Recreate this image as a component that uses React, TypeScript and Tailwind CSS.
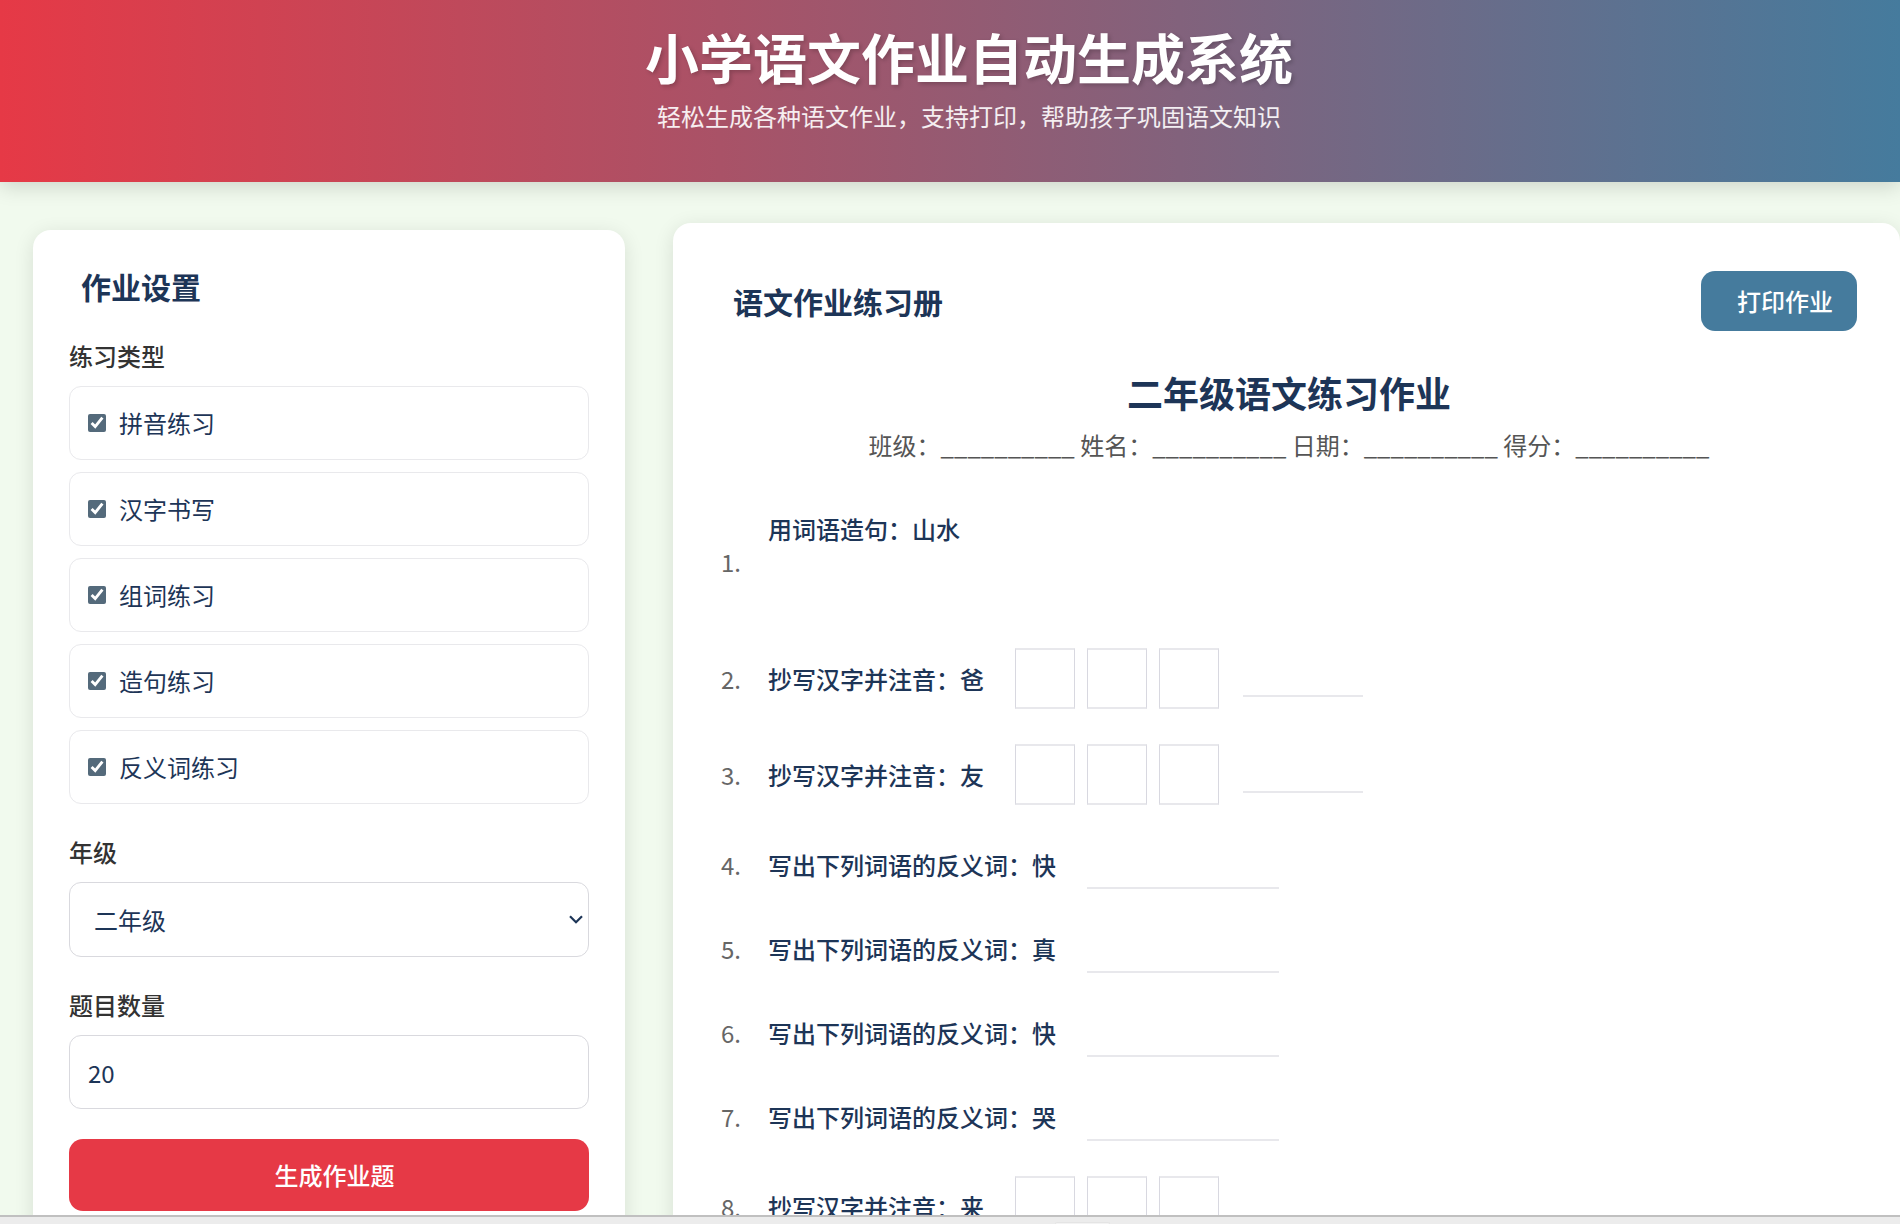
import React from "react";

const cjk = "font-['Noto_Sans_CJK_SC','Noto_Sans',sans-serif]";
const types = ["拼音练习", "汉字书写", "组词练习", "造句练习", "反义词练习"];
const rows: { t: "b" | "a"; text: string }[] = [
  { t: "b", text: "抄写汉字并注音：爸" },
  { t: "b", text: "抄写汉字并注音：友" },
  { t: "a", text: "写出下列词语的反义词：快" },
  { t: "a", text: "写出下列词语的反义词：真" },
  { t: "a", text: "写出下列词语的反义词：快" },
  { t: "a", text: "写出下列词语的反义词：哭" },
  { t: "b", text: "抄写汉字并注音：来" },
];

function Label({ children, className }: { children: React.ReactNode; className: string }) {
  return <div className={`h-9 leading-9 text-2xl font-medium text-[#333333] ${className}`}>{children}</div>;
}

export default function App() {
  return (
    <div className={`${cjk} w-full h-[1224px] overflow-hidden flex flex-col bg-[#f1faee]`}>
      <header className="h-[182px] shrink-0 relative z-10 flex flex-col items-center pl-[38px] pt-[22px] text-white bg-[linear-gradient(90deg,#e63946,#457b9d)] shadow-[0_4px_20px_rgba(0,0,0,0.16)]">
        <h1 className="text-[54px] leading-[70px] font-bold text-shadow-[2px_2px_4px_rgba(0,0,0,0.2)]">小学语文作业自动生成系统</h1>
        <p className="text-2xl leading-9 mt-[6px] text-white/90">轻松生成各种语文作业，支持打印，帮助孩子巩固语文知识</p>
      </header>

      <main className="flex-1 min-h-0 overflow-hidden flex items-start gap-12 pl-[33px]">
        <aside className="w-[592px] shrink-0 mt-[48px] bg-white rounded-[18px] px-9 pt-[38px] pb-10 shadow-[0_4px_20px_rgba(0,0,0,0.11)]">
          <h2 className="h-9 leading-9 pl-3 text-[30px] font-bold text-[#1d3557]">作业设置</h2>
          <Label className="mt-[34px]">练习类型</Label>
          <div className="mt-3 flex flex-col gap-3">
            {types.map((t) => (
              <label key={t} className="h-[74px] flex items-center gap-[14px] pl-[18px] border-[1.5px] border-[#e9e9ec] rounded-xl text-2xl text-[#1d3557]">
                <input type="checkbox" defaultChecked className="w-[18px] h-[18px] m-0 accent-[#546a7b]" />
                <span className="-ml-px">{t}</span>
              </label>
            ))}
          </div>
          <Label className="mt-[30px]">年级</Label>
          <div className="relative mt-3 h-[75px]">
            <select defaultValue="2" className="appearance-none w-full h-full pl-[24px] pr-8 border-[1.5px] border-[#d9d9de] rounded-xl bg-white text-2xl text-[#1d3557]">
              <option value="1">一年级</option>
              <option value="2">二年级</option>
              <option value="3">三年级</option>
            </select>
            <svg className="absolute left-[500px] top-[33px] pointer-events-none" width="14" height="9" viewBox="0 0 14 9" fill="none">
              <path d="M1 1.2 L7 7.2 L13 1.2" stroke="#1d3557" strokeWidth="2.2" />
            </svg>
          </div>
          <Label className="mt-[30px]">题目数量</Label>
          <input type="number" defaultValue={20} className="mt-3 block w-full h-[74px] pl-[18px] border-[1.5px] border-[#d9d9de] rounded-xl bg-white text-2xl text-[#1d3557]" />
          <button className="mt-[30px] w-full h-[72px] pl-[11px] pb-[1px] rounded-[14px] bg-[#e63946] text-white text-2xl font-medium">生成作业题</button>
        </aside>

        <section className="flex-1 min-w-0 mt-[41px] bg-white rounded-[18px] pl-12 pr-[43px] pt-[47px] pb-10 shadow-[0_4px_20px_rgba(0,0,0,0.11)]">
          <div className="flex items-center justify-between h-[61px]">
            <h2 className="pl-3 pt-[1px] text-[30px] font-bold text-[#1d3557]">语文作业练习册</h2>
            <button className="w-[156px] h-[60px] pl-[12px] rounded-[14px] bg-[#457b9d] text-white text-2xl font-medium">打印作业</button>
          </div>
          <h3 className="mt-[37px] text-center text-[36px] leading-[48px] font-bold text-[#1d3557]">二年级语文练习作业</h3>
          <p className="mt-[11px] text-center text-2xl leading-9 text-[#555555] whitespace-pre">班级：__________ 姓名：__________ 日期：__________ 得分：__________</p>

          <ol className="mt-[29px] text-2xl text-[#1d3557]">
            <li className="h-[140px] flex items-center">
              <span className="w-[47px] shrink-0 text-[#666666] -mt-px">1.</span>
              <span className="self-start pt-[19px] leading-9 font-medium">用词语造句：山水</span>
            </li>
            {rows.map((r, i) => (
              <li key={i} className={`flex items-center ${r.t === "b" ? "h-[96px]" : "h-[84px]"}`}>
                <span className="w-[47px] shrink-0 text-[#666666] -mt-[2px]">{i + 2}.</span>
                <span className="font-medium -mt-[2px]">{r.text}</span>
                {r.t === "b" ? (
                  <>
                    <div className="flex gap-3 ml-[31px] mb-[4px]">
                      {[0, 1, 2].map((b) => (
                        <div key={b} className="w-[60px] h-[61px] border-x border-y-2 border-x-[#d8d8e0] border-y-[#e8e8ec]" />
                      ))}
                    </div>
                    <div className="ml-6 w-[120px] h-[34px] border-b-2 border-[#e8e8ec]" />
                  </>
                ) : (
                  <div className="ml-[31px] w-[192px] h-[45px] border-b-2 border-[#e8e8ec]" />
                )}
              </li>
            ))}
          </ol>
        </section>
      </main>

      <footer className="h-[9px] shrink-0 relative z-10 bg-[#ececec] border-t-[2px] border-[#c0c0c0]">
        <div className="ml-[1055px] mt-[5px] w-[55px] h-[2px] bg-[#f3f3f3] border-x border-t border-[#e4e4e4] rounded-t-sm" />
      </footer>
    </div>
  );
}
